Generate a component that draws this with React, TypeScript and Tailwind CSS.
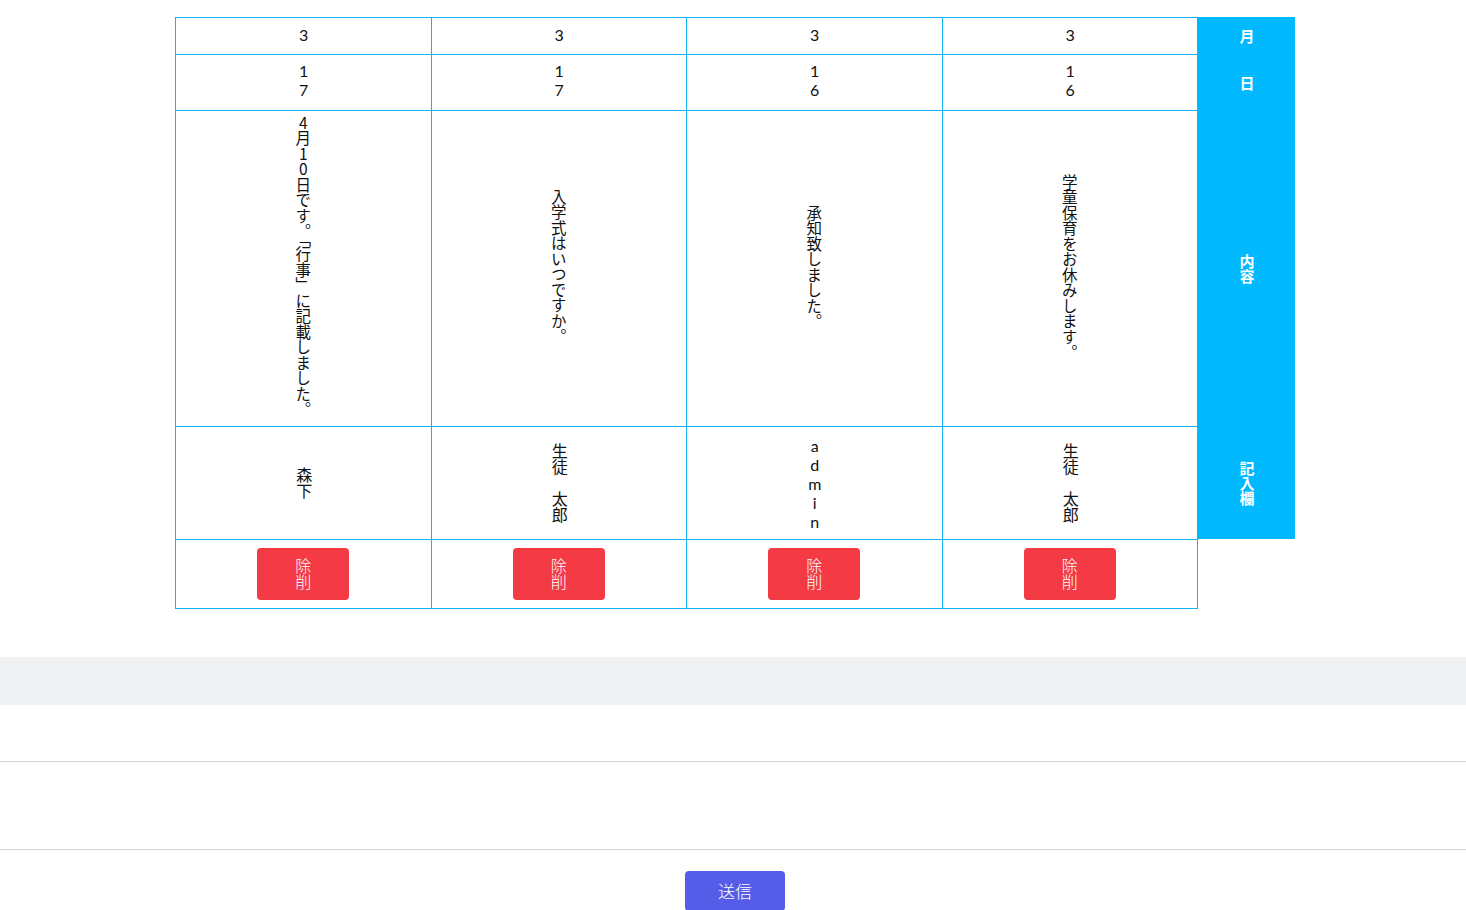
import React from 'react';

type Entry = {
  month: string;
  day: string;
  body: string;
  writer: string;
};

const entries: Entry[] = [
  { month: '3', day: '16', body: '学童保育をお休みします。', writer: '生徒　太郎' },
  { month: '3', day: '16', body: '承知致しました。', writer: 'admin' },
  { month: '3', day: '17', body: '入学式はいつですか。', writer: '生徒　太郎' },
  { month: '3', day: '17', body: '4月10日です。「行事」に記載しました。', writer: '森下' },
];

const vertical = '[writing-mode:vertical-rl] [text-orientation:upright]';
const latinFont = "font-['Lato','Noto_Sans_CJK_JP',sans-serif]";
const cjkFont = "font-['Noto_Sans_CJK_JP',sans-serif]";

const EntryColumn: React.FC<{ entry: Entry }> = ({ entry }) => {
  return (
    <div className="flex flex-1 flex-col border-l border-[#0cb4f0] text-[#111]">
      <div className="flex h-[37px] items-center justify-center border-b border-[#0cb4f0] pb-[4px]">
        <span className={`${vertical} ${latinFont} text-[16px] leading-[16px]`}>{entry.month}</span>
      </div>
      <div className="flex h-[56px] items-center justify-center border-b border-[#0cb4f0] pb-[6px]">
        <span className={`${vertical} ${latinFont} text-[16px] leading-[16px]`}>{entry.day}</span>
      </div>
      <div className="flex h-[316px] items-center justify-center border-b border-[#0cb4f0] pb-[4px]">
        <span className={`${vertical} ${cjkFont} whitespace-nowrap text-[15.5px] leading-[16px]`}>
          {entry.body}
        </span>
      </div>
      <div className="flex h-[113px] items-center justify-center border-b border-[#0cb4f0]">
        <span className={`${vertical} ${latinFont} text-[16px] leading-[16px]`}>{entry.writer}</span>
      </div>
      <div className="flex h-[69px] items-center justify-center border-b border-[#0cb4f0]">
        <button
          type="button"
          className={`flex h-[52px] w-[92px] items-center justify-center rounded-[4px] bg-[#f43a45] text-white ${cjkFont} text-[16px] font-light`}
        >
          <span className={`${vertical} leading-[18px]`}>除削</span>
        </button>
      </div>
    </div>
  );
};

const App: React.FC = () => {
  return (
    <div className="min-h-screen bg-white pt-[17px]">
      <div className="ml-[175px] flex w-[1120px]">
        <div className="flex w-[1023px] flex-row-reverse border-r border-t border-[#0cb4f0]">
          {entries.map((entry, i) => (
            <EntryColumn key={i} entry={entry} />
          ))}
        </div>
        <div className={`flex h-[522px] w-[97px] flex-col bg-[#00b9ff] text-white ${cjkFont} text-[15px] font-bold`}>
          <div className="flex h-[38px] items-center justify-center">
            <span className={`${vertical} leading-[16px]`}>月</span>
          </div>
          <div className="flex h-[56px] items-center justify-center">
            <span className={`${vertical} leading-[16px]`}>日</span>
          </div>
          <div className="flex h-[316px] items-center justify-center">
            <span className={`${vertical} leading-[16px]`}>内容</span>
          </div>
          <div className="flex h-[112px] items-center justify-center">
            <span className={`${vertical} leading-[16px]`}>記入欄</span>
          </div>
        </div>
      </div>

      <div className="mt-[48px] h-[48px] bg-[#f0f1f3]" />
      <div className="h-[56px]" />
      <div className="h-[89px] border-y border-[#d4d4d8]" />

      <div className="flex justify-center pl-[4px] pt-[21px]">
        <button
          type="button"
          className={`h-[40px] w-[100px] rounded-[4px] bg-[#545ce8] text-white ${cjkFont} text-[17px] font-light`}
        >
          送信
        </button>
      </div>
    </div>
  );
};

export default App;
